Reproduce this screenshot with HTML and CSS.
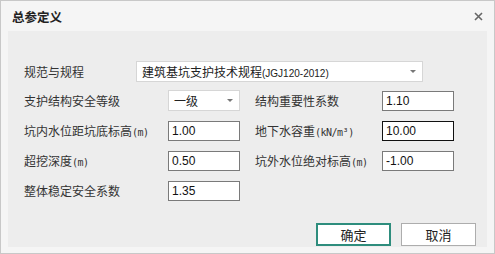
FILE: index.html
```html
<!DOCTYPE html>
<html lang="zh-CN">
<head>
    <meta charset="UTF-8">
    <meta name="viewport" content="width=device-width, initial-scale=1.0">
    <title>总参定义</title>
    <link rel="stylesheet" href="styles.css">
</head>
<body>
    <div class="dialog">
        <div class="title-bar">
            <span class="title">总参定义</span>
            <svg class="close" width="9" height="9" viewBox="0 0 9 9">
                <path d="M1 1 L8 8 M8 1 L1 8" stroke="#666" stroke-width="1.6" fill="none"/>
            </svg>
        </div>
        <div class="panel">
            <div class="spec-row">
                <span class="label spec-label">规范与规程</span>
                <div class="select wide">
                    <span>建筑基坑支护技术规程<span class="latin">(JGJ120-2012)</span></span>
                    <span class="arrow"></span>
                </div>
            </div>
            <div class="form-grid">
                <span class="label">支护结构安全等级</span>
                <div class="select small">
                    <span>一级</span>
                    <span class="arrow"></span>
                </div>
                <span class="label">结构重要性系数</span>
                <div class="input">1.10</div>

                <span class="label">坑内水位距坑底标高<span class="unit">(m)</span></span>
                <div class="input">1.00</div>
                <span class="label">地下水容重<span class="unit">(kN/m³)</span></span>
                <div class="input focused">10.00</div>

                <span class="label">超挖深度<span class="unit">(m)</span></span>
                <div class="input">0.50</div>
                <span class="label">坑外水位绝对标高<span class="unit">(m)</span></span>
                <div class="input">-1.00</div>

                <span class="label">整体稳定安全系数</span>
                <div class="input">1.35</div>
            </div>
            <div class="buttons">
                <button class="btn primary">确定</button>
                <button class="btn">取消</button>
            </div>
        </div>
    </div>
</body>
</html>
```

FILE: styles.css
```css
body {
    margin: 0;
    padding: 0;
    font-family: "Noto Sans CJK SC", "Liberation Sans", sans-serif;
    color: #333;
}

.dialog {
    width: 495px;
    height: 254px;
    box-sizing: border-box;
    border: 1px solid #c8c8c8;
    background: #f5f5f5;
    display: flex;
    flex-direction: column;
}

.title-bar {
    height: 30px;
    display: flex;
    align-items: center;
    justify-content: space-between;
    padding: 0 11px 0 11px;
}

.title {
    font-size: 12.5px;
    font-weight: bold;
    color: #222;
    margin-top: 1px;
}

.close {
    display: block;
    margin-top: 1px;
}

.panel {
    height: 216px;
    margin: 0 7px;
    background: #ededed;
    display: flex;
    flex-direction: column;
    padding: 30px 0 0 16px;
    box-sizing: border-box;
}

.label {
    font-size: 12px;
    color: #333;
    line-height: 20px;
    white-space: nowrap;
}

.unit {
    font-family: "DejaVu Sans Mono", monospace;
    font-size: 10px;
    letter-spacing: -0.5px;
}

.spec-row {
    display: flex;
    align-items: center;
    height: 21px;
}

.spec-label {
    width: 112px;
}

.select {
    display: flex;
    align-items: center;
    justify-content: space-between;
    box-sizing: border-box;
    background: #fff;
    border: 1px solid #d6d6d6;
    font-size: 12px;
    color: #222;
    padding: 0 6px 0 5px;
}

.select.wide {
    width: 287px;
    height: 21px;
}

.select.small {
    width: 72px;
    height: 21px;
    margin-top: -1px;
}

.latin {
    font-family: "Liberation Sans", sans-serif;
    font-size: 10px;
}

.arrow {
    width: 0;
    height: 0;
    border-left: 3px solid transparent;
    border-right: 3px solid transparent;
    border-top: 3px solid #777;
}

.form-grid {
    display: grid;
    grid-template-columns: 144px 72px 142px 72px;
    row-gap: 10px;
    margin-top: 9px;
    grid-auto-rows: 20px;
}

.form-grid .label:nth-child(4n+3) {
    padding-left: 15px;
}

.input {
    box-sizing: border-box;
    height: 20px;
    background: #fff;
    border: 1px solid #7a7a7a;
    font-family: "Liberation Sans", sans-serif;
    font-size: 12px;
    color: #111;
    line-height: 18px;
    padding-left: 3px;
}

.input.focused {
    border-color: #111;
}

.buttons {
    margin-top: auto;
    margin-bottom: 1px;
    display: flex;
    justify-content: flex-end;
    gap: 10px;
    padding-right: 11px;
}

.btn {
    width: 75px;
    height: 23px;
    box-sizing: border-box;
    background: #fff;
    border: 1px solid #adadad;
    font-family: "Noto Sans CJK SC", sans-serif;
    font-size: 13px;
    color: #222;
    padding: 0;
}

.btn.primary {
    border: 2px solid #2e8d7d;
}
```
